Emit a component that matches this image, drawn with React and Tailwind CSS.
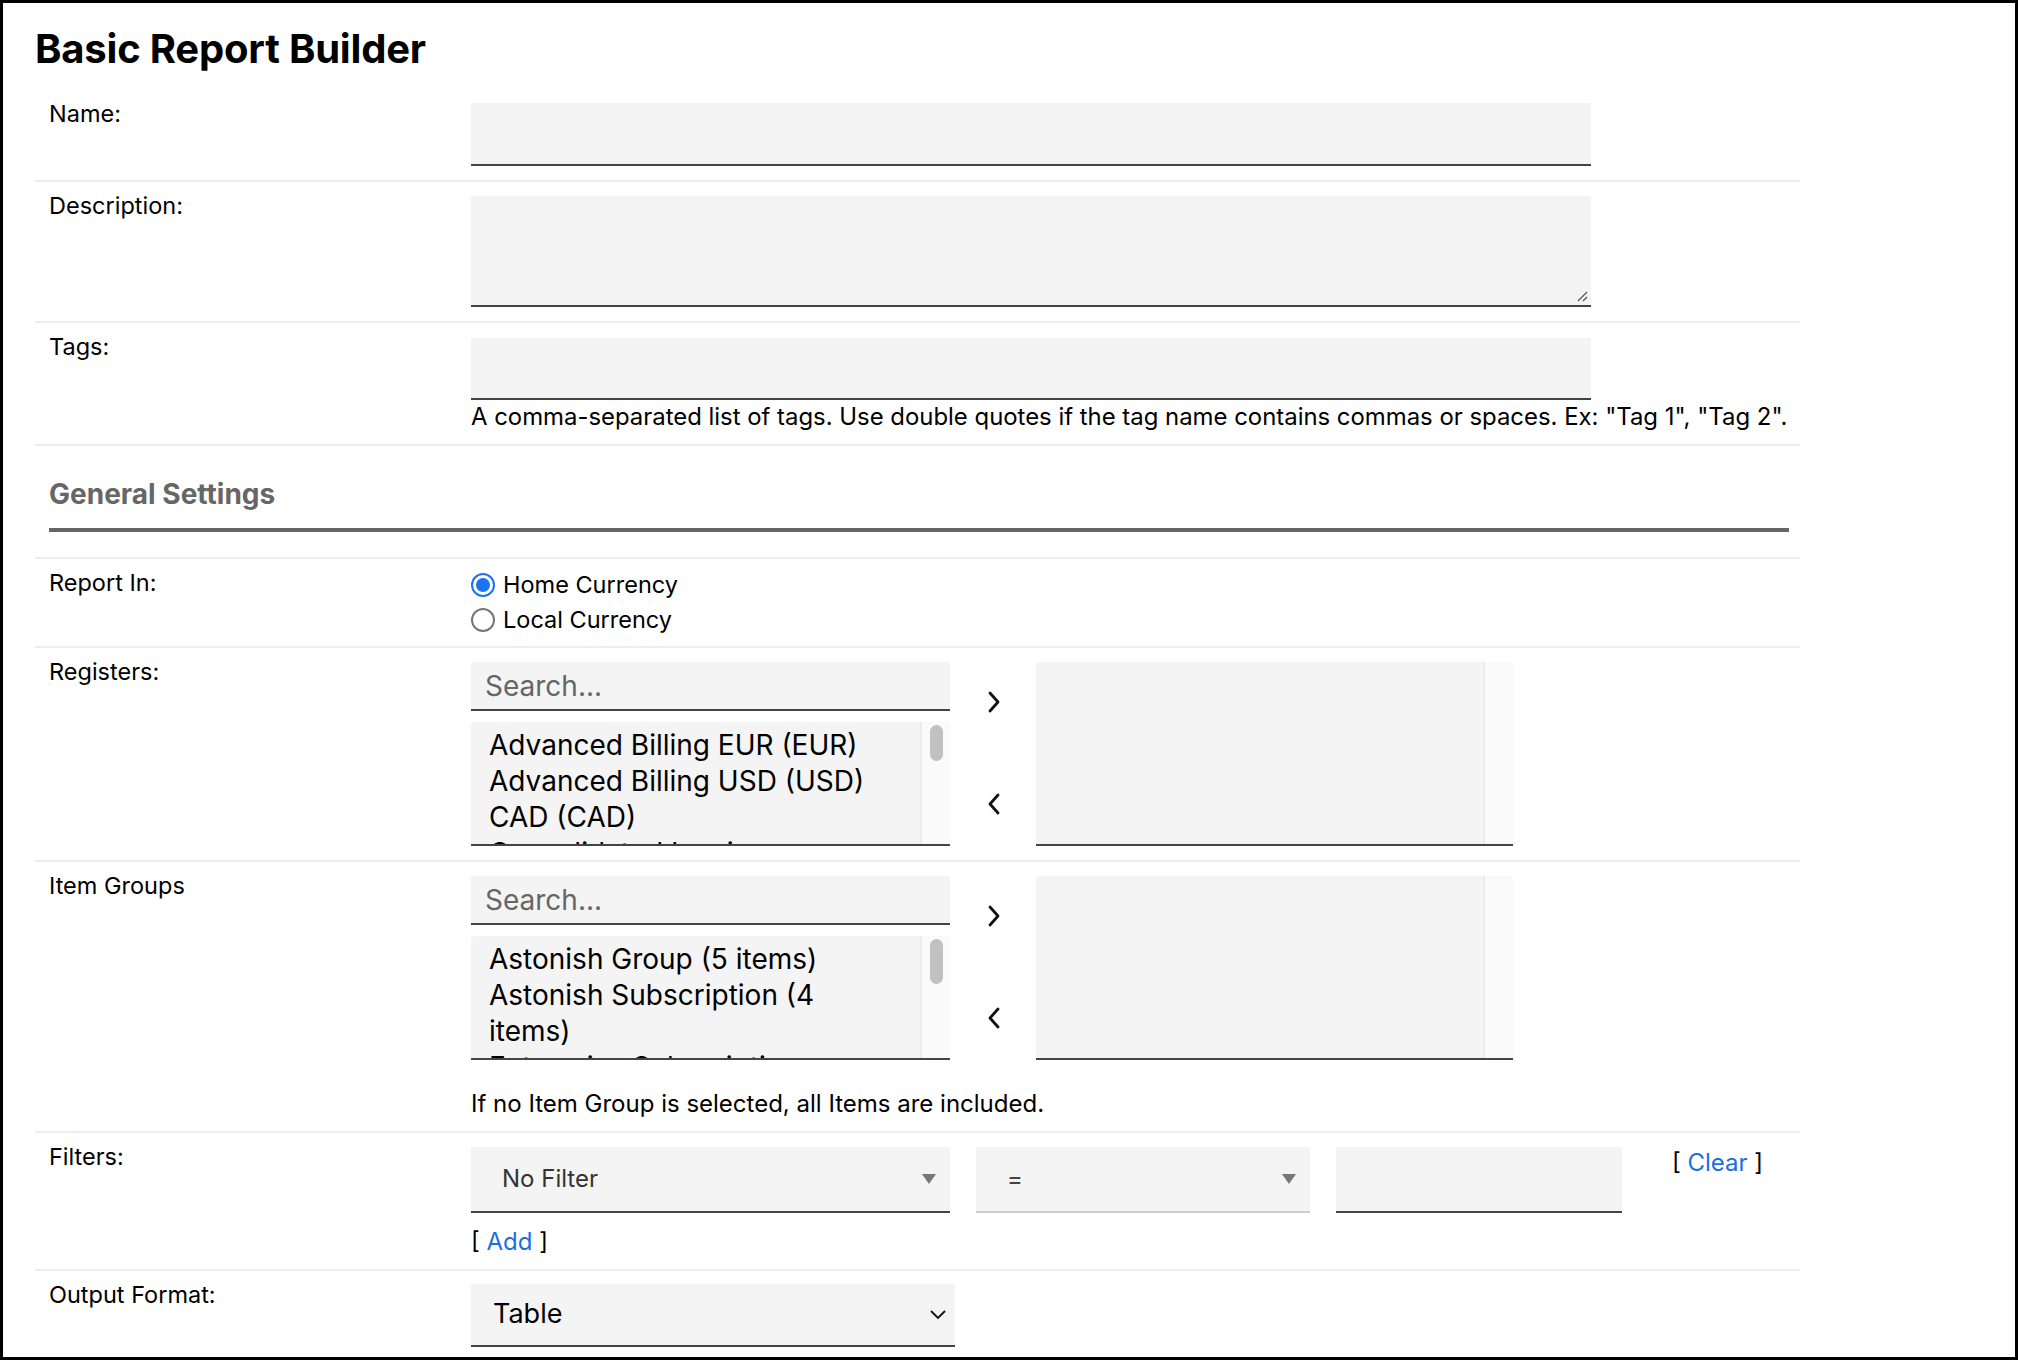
import React from "react";

const font = { fontFamily: "Inter, 'Noto Sans', sans-serif" };

const Row = ({ label, children, className = "" }) => (
  <div className={`flex border-t-2 border-[#eeeeee] pt-[10px] ${className}`}>
    <div className="w-[436px] shrink-0 pl-[14px] text-[23.5px] leading-[28px] text-black">
      {label}
    </div>
    <div className="flex-1">{children}</div>
  </div>
);

const ChevronRight = () => (
  <svg width="16" height="24" viewBox="0 0 16 24" fill="none">
    <polyline
      points="4,3 12,12 4,21"
      stroke="#111"
      strokeWidth="2.8"
      strokeLinecap="round"
      strokeLinejoin="round"
    />
  </svg>
);

const ChevronLeft = () => (
  <svg width="16" height="24" viewBox="0 0 16 24" fill="none">
    <polyline
      points="12,3 4,12 12,21"
      stroke="#111"
      strokeWidth="2.8"
      strokeLinecap="round"
      strokeLinejoin="round"
    />
  </svg>
);

const Triangle = () => (
  <svg width="14" height="10" viewBox="0 0 14 10">
    <polygon points="0,0 14,0 7,10" fill="#777" />
  </svg>
);

const DualList = ({ items, thumb }) => (
  <div className="flex items-start">
    <div className="w-[479px]">
      <div className="h-[49px] bg-[#f4f4f4] border-b-2 border-[#444] flex items-center pl-[14px] text-[28px] text-[#666]">
        Search...
      </div>
      <div className="mt-[11px] h-[124px] bg-[#f4f4f4] border-b-2 border-[#444] rounded-t-[4px] flex overflow-hidden">
        <div className="flex-1 pl-[18px] pt-[5px] text-[28px] leading-[36px] text-black overflow-hidden">
          {items.map((t, i) => (
            <div key={i} className="pr-[40px]">
              {t}
            </div>
          ))}
        </div>
        <div className="w-[30px] bg-[#fafafa] border-l-2 border-[#ebebeb] pt-[3px] flex justify-center">
          <div className={`w-[13px] ${thumb} rounded-full bg-[#c1c1c1]`} />
        </div>
      </div>
    </div>
    <div className="w-[86px] h-[184px] flex flex-col items-center justify-between pt-[28px] pb-[30px] pl-[2px]">
      <ChevronRight />
      <ChevronLeft />
    </div>
    <div className="w-[477px] h-[184px] bg-[#f4f4f4] border-b-2 border-[#444] rounded-t-[4px] flex justify-end">
      <div className="w-[30px] h-full bg-[#fafafa] border-l-2 border-[#ebebeb]" />
    </div>
  </div>
);

export default function App() {
  return (
    <div
      className="w-[2018px] h-[1360px] border-[3px] border-black bg-white overflow-hidden"
      style={font}
    >
      <div className="pl-[32px] w-[1797px]">
        <h1 className="pt-[26px] text-[40px] leading-[40px] font-bold text-black tracking-[-0.2px]">
          Basic Report Builder
        </h1>

        {/* name */}
        <div className="flex pt-[24px] pb-[14px]">
          <div className="w-[436px] shrink-0 pl-[14px] text-[23.5px] leading-[28px] pt-[7px]">
            Name:
          </div>
          <div className="flex-1 pt-[10px]">
            <div className="w-[1120px] h-[63px] bg-[#f4f4f4] border-b-2 border-[#444]" />
          </div>
        </div>

        <Row label="Description:" className="pb-[14px]">
          <div className="mt-[4px] relative w-[1120px] h-[111px] bg-[#f4f4f4] border-b-2 border-[#444]">
            <svg
              className="absolute right-[3px] bottom-[3px]"
              width="12"
              height="12"
              viewBox="0 0 12 12"
            >
              <line x1="11" y1="2" x2="2" y2="11" stroke="#555" strokeWidth="1.3" />
              <line x1="11" y1="7" x2="7" y2="11" stroke="#555" strokeWidth="1.3" />
            </svg>
          </div>
        </Row>

        <Row label="Tags:" className="pb-[12px]">
          <div className="mt-[5px] w-[1120px] h-[62px] bg-[#f4f4f4] border-b-2 border-[#444]" />
          <div className="text-[23.9px] leading-[30px] pt-[2px] text-black whitespace-nowrap">
            A comma-separated list of tags. Use double quotes if the tag name contains
            commas or spaces. Ex: "Tag 1", "Tag 2".
          </div>
        </Row>

        {/* general settings */}
        <div className="border-t-2 border-[#eeeeee] pt-[31px] pb-[25px]">
          <div className="ml-[14px] w-[1740px] border-b-4 border-[#666] pb-[17px]">
            <h2 className="text-[28px] leading-[34px] font-bold text-[#666]">
              General Settings
            </h2>
          </div>
        </div>

        <Row label="Report In:" className="pb-[9px]">
          <div className="-mt-[2px] text-[23.5px] text-black">
            <div className="h-[35px] flex items-center gap-[8px]">
              <div className="w-[24px] h-[24px] rounded-full border-[2.5px] border-[#1a73f0] flex items-center justify-center bg-white">
                <div className="w-[14px] h-[14px] rounded-full bg-[#1a73f0]" />
              </div>
              <span>Home Currency</span>
            </div>
            <div className="h-[35px] flex items-center gap-[8px]">
              <div className="w-[24px] h-[24px] rounded-full border-[2px] border-[#767676] bg-white" />
              <span>Local Currency</span>
            </div>
          </div>
        </Row>

        <Row label="Registers:" className="pb-[14px]">
          <div className="mt-[4px]">
            <DualList
              thumb="h-[36px]"
              items={[
                "Advanced Billing EUR (EUR)",
                "Advanced Billing USD (USD)",
                "CAD (CAD)",
                "Consolidated Invoice Register",
              ]}
            />
          </div>
        </Row>

        <Row label="Item Groups" className="pb-[12px]">
          <div className="mt-[4px]">
            <DualList
              thumb="h-[45px]"
              items={[
                "Astonish Group (5 items)",
                "Astonish Subscription (4 items)",
                "Enterprise Subscription",
              ]}
            />
          </div>
          <div className="pt-[29px] text-[24px] leading-[30px] text-black">
            If no Item Group is selected, all Items are included.
          </div>
        </Row>

        <Row label="Filters:" className="pb-[12px]">
          <div className="mt-[4px] flex items-start">
            <div className="w-[479px] h-[66px] bg-[#f4f4f4] border-b-2 border-[#444] flex items-center justify-between pl-[31px] pr-[14px] text-[24px] text-[#333]">
              <span>No Filter</span>
              <Triangle />
            </div>
            <div className="ml-[26px] w-[334px] h-[66px] bg-[#f4f4f4] border-b-2 border-[#cccccc] flex items-center justify-between pl-[31px] pr-[14px] text-[24px] text-[#444]">
              <span>=</span>
              <Triangle />
            </div>
            <div className="ml-[26px] w-[286px] h-[66px] bg-[#f4f4f4] border-b-2 border-[#444]" />
            <div className="ml-[50px] pt-[1px] text-[24px] leading-[30px] text-black">
              [ <span className="text-[#1a6fdf]">Clear</span> ]
            </div>
          </div>
          <div className="pt-[14px] text-[24px] leading-[30px] text-black">
            [ <span className="text-[#1a6fdf]">Add</span> ]
          </div>
        </Row>

        <Row label="Output Format:">
          <div className="mt-[3px] w-[484px] h-[63px] bg-[#f4f4f4] border-b-2 border-[#444] flex items-center justify-between pl-[22px] pr-[8px] text-[27px] text-black">
            <span>Table</span>
            <svg width="18" height="12" viewBox="0 0 18 12" fill="none">
              <polyline points="2,2 9,9 16,2" stroke="#111" strokeWidth="1.8" />
            </svg>
          </div>
        </Row>
      </div>
    </div>
  );
}
